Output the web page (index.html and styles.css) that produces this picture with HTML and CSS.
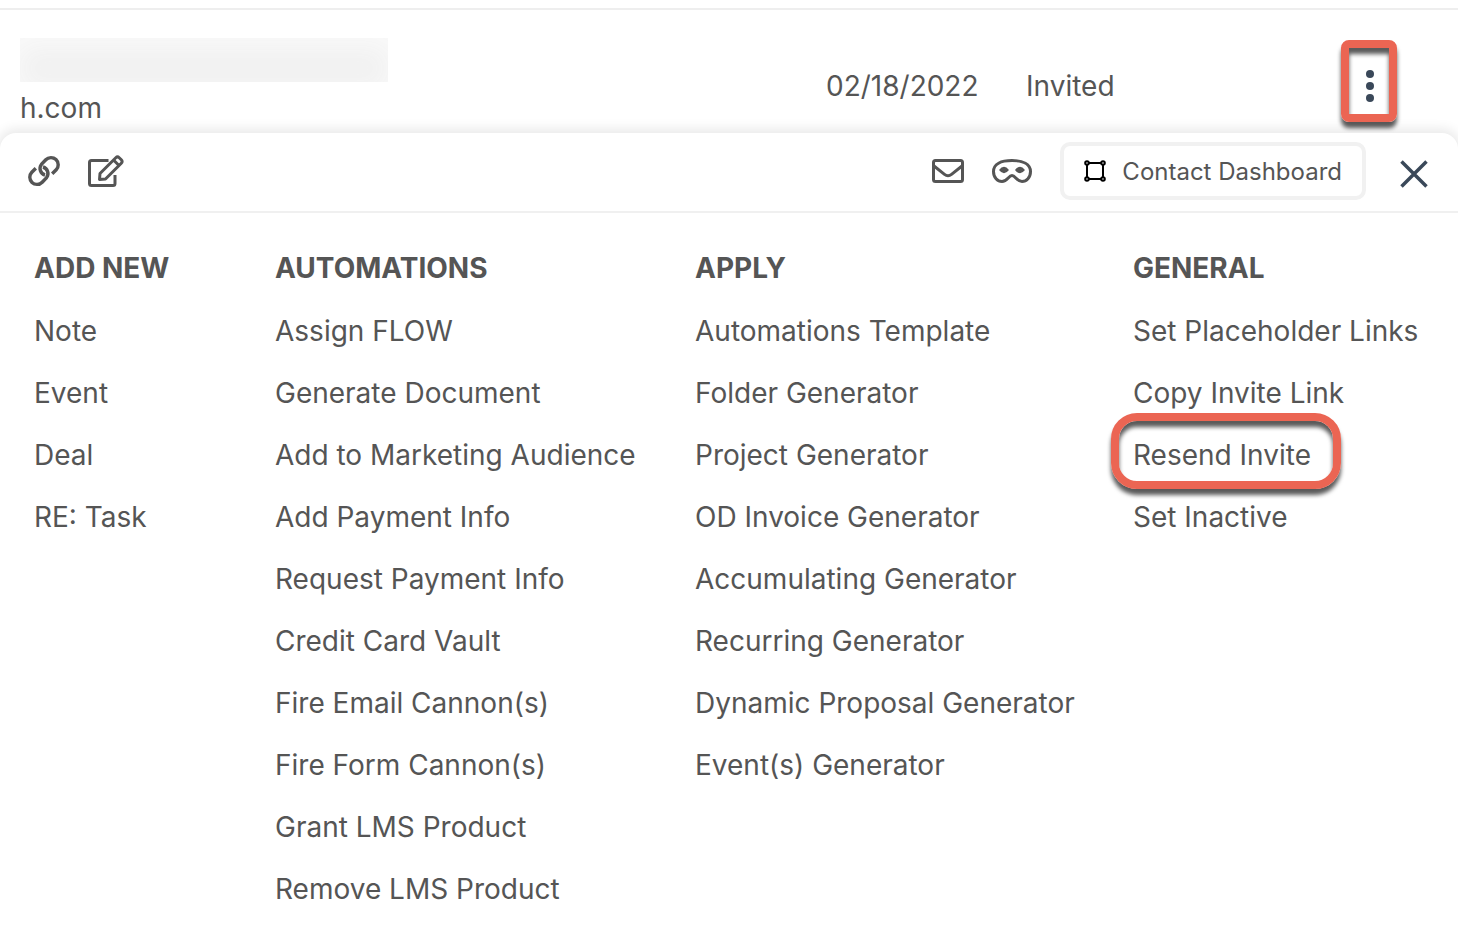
FILE: index.html
```html
<!DOCTYPE html>
<html lang="en">
<head>
  <meta charset="UTF-8">
  <meta name="viewport" content="width=device-width, initial-scale=1.0">
  <title>Contacts</title>
  <link rel="stylesheet" href="styles.css">
</head>
<body>

  <div class="contact-row">
    <div class="contact-email">
      <div class="redacted"></div>
      <span>h.com</span>
    </div>
    <div class="contact-date">02/18/2022</div>
    <div class="contact-status">Invited</div>
    <button type="button" class="more-button marked" aria-label="More actions">
      <svg width="8" height="32" viewBox="0 0 8 32" fill="currentColor">
        <circle cx="4" cy="4" r="4"/>
        <circle cx="4" cy="16" r="4"/>
        <circle cx="4" cy="28" r="4"/>
      </svg>
    </button>
  </div>

  <div class="panel">
    <div class="toolbar">
      <button type="button" class="icon-button" aria-label="Copy link">
        <svg width="32" height="32" viewBox="0 0 32 32" fill="none" stroke="currentColor" stroke-width="3.4">
          <path d="M17 20 A6.800 6.800 0 0 1 13.400 9.400 L17.800 4.800 A7.200 7.200 0 0 1 28.200 14.800 L24.200 18.800"/>
          <path d="M15 12 A6.800 6.800 0 0 1 18.600 22.600 L14.200 27.200 A7.200 7.200 0 0 1 3.800 17.200 L7.800 13.200"/>
        </svg>
      </button>
      <button type="button" class="icon-button" aria-label="Edit">
        <svg width="36" height="32" viewBox="0 0 36 32" fill="none" stroke="currentColor" stroke-width="3" stroke-linejoin="round">
          <path d="M20.5 5.5 H3.5 Q1.5 5.5 1.5 7.5 V28.5 Q1.5 30.5 3.5 30.5 H25 Q27 30.5 27 28.5 V20"/>
          <path d="M11.5 24.5 L12 18.5 L27.8 2.7 Q29.5 1 31.2 2.7 L33.3 4.8 Q35 6.500 33.3 8.200 L17.5 24 Z"/>
          <path d="M25.5 5 L31 10.500"/>
        </svg>
      </button>
      <span class="spacer"></span>
      <button type="button" class="icon-button" aria-label="Send email">
        <svg width="32" height="24" viewBox="0 0 32 24" fill="none" stroke="currentColor" stroke-width="3" stroke-linejoin="round">
          <rect x="1.5" y="1.5" width="29" height="21" rx="2"/>
          <path d="M2 7 L12.500 15.400 Q16 18.200 19.500 15.400 L30 7"/>
        </svg>
      </button>
      <button type="button" class="icon-button" aria-label="Log in as contact">
        <svg width="40" height="24" viewBox="0 0 40 24">
          <path d="M20 1.5 C31 1.5 38.5 5 38.5 12.5 C38.5 18.5 34.5 22.500 30 22.500 C24.500 22.500 23.500 16.500 20 16.500 C16.500 16.500 15.500 22.500 10 22.500 C5.500 22.500 1.500 18.500 1.500 12.500 C1.500 5 9 1.500 20 1.500 Z" fill="none" stroke="currentColor" stroke-width="3"/>
          <path d="M7 11 Q12 4.600 17 11 Q12 17.400 7 11 Z M23 11 Q28 4.600 33 11 Q28 17.400 23 11 Z" fill="currentColor"/>
        </svg>
      </button>
      <button type="button" class="dashboard-button">
        <svg width="22" height="22" viewBox="0 0 22 22" fill="none" stroke="#000" stroke-width="2">
          <path d="M5 3 H17 M5 19 H17 M3 5 V17 M19 5 V17"/>
          <circle cx="3" cy="3" r="1.8"/>
          <circle cx="19" cy="3" r="1.8"/>
          <circle cx="3" cy="19" r="1.8"/>
          <circle cx="19" cy="19" r="1.8"/>
        </svg>
        Contact Dashboard
      </button>
      <button type="button" class="icon-button close-button" aria-label="Close">
        <svg width="28" height="28" viewBox="0 0 28 28" fill="none" stroke="currentColor" stroke-width="3.5">
          <path d="M1.5 1.5 L26.5 26.5 M26.5 1.5 L1.5 26.5"/>
        </svg>
      </button>
    </div>

    <div class="menu">
      <div class="menu-column">
        <h2>ADD NEW</h2>
        <a href="#">Note</a>
        <a href="#">Event</a>
        <a href="#">Deal</a>
        <a href="#">RE: Task</a>
      </div>
      <div class="menu-column">
        <h2>AUTOMATIONS</h2>
        <a href="#">Assign FLOW</a>
        <a href="#">Generate Document</a>
        <a href="#">Add to Marketing Audience</a>
        <a href="#">Add Payment Info</a>
        <a href="#">Request Payment Info</a>
        <a href="#">Credit Card Vault</a>
        <a href="#">Fire Email Cannon(s)</a>
        <a href="#">Fire Form Cannon(s)</a>
        <a href="#">Grant LMS Product</a>
        <a href="#">Remove LMS Product</a>
      </div>
      <div class="menu-column">
        <h2>APPLY</h2>
        <a href="#">Automations Template</a>
        <a href="#">Folder Generator</a>
        <a href="#">Project Generator</a>
        <a href="#">OD Invoice Generator</a>
        <a href="#">Accumulating Generator</a>
        <a href="#">Recurring Generator</a>
        <a href="#">Dynamic Proposal Generator</a>
        <a href="#">Event(s) Generator</a>
      </div>
      <div class="menu-column">
        <h2>GENERAL</h2>
        <a href="#">Set Placeholder Links</a>
        <a href="#">Copy Invite Link</a>
        <a href="#" class="resend">Resend Invite<span class="resend-mark marked"></span></a>
        <a href="#">Set Inactive</a>
      </div>
    </div>
  </div>

</body>
</html>
```
FILE: styles.css
```css
* {
  box-sizing: border-box;
}
body {
  margin: 0;
  padding-top: 8px;
  background-color: #fff;
  color: #555;
  font-family: Inter, "Liberation Sans", sans-serif;
  font-size: 28px;
  line-height: 34px;
}
button {
  padding: 0;
  border: none;
  background: none;
  color: inherit;
  font-family: inherit;
  cursor: pointer;
}
svg {
  display: block;
}

/* contact row */
.contact-row {
  display: grid;
  grid-template-columns: 1fr 200px 315px 56px;
  align-items: start;
  padding: 28px 61px 8px 20px;
  border-top: 2px solid #eee;
}
.redacted {
  width: 368px;
  height: 44px;
  margin-bottom: 9px;
  background-color: #f1f1f1;
  box-shadow: inset 0 8px 24px 2px #f9f9f9;
}
.contact-date,
.contact-status {
  padding-top: 31px;
}
.more-button {
  display: flex;
  justify-content: center;
  align-items: center;
  height: 82px;
  margin-top: 2px;
  padding: 10px 0 0 2px;
  border-radius: 8px;
  color: #3a4859;
}
.marked {
  border: 8px solid #eb6553;
  box-shadow: 0 6px 4px rgba(0, 0, 0, 0.65), inset 0 6px 4px rgba(0, 0, 0, 0.65);
}

/* actions panel */
.panel {
  border-radius: 16px 16px 0 0;
  background-color: #fff;
  box-shadow: 0 -2px 12px 2px rgba(0, 0, 0, 0.09);
}
.toolbar {
  display: flex;
  align-items: center;
  gap: 28px;
  height: 80px;
  padding: 0 30px 2px 28px;
  border-bottom: 2px solid #f0f0f0;
}
.spacer {
  flex: 1;
}
.dashboard-button {
  display: flex;
  align-items: center;
  gap: 16px;
  height: 58px;
  padding: 0 20px;
  border: 4px solid #f1f1f1;
  border-radius: 10px;
  font-size: 24px;
}
.close-button {
  margin-left: 6px;
  padding-top: 6px;
  color: #3a4859;
}
.menu {
  display: grid;
  grid-template-columns: 241fr 420fr 438fr 325fr;
  padding: 37px 0 46px 34px;
}
.menu-column {
  display: flex;
  flex-direction: column;
  align-items: flex-start;
  gap: 28px;
}
.menu-column h2 {
  margin: 0;
  font-size: 28px;
  font-weight: 700;
  line-height: 36px;
}
.menu-column a {
  color: inherit;
  text-decoration: none;
  white-space: nowrap;
}
.resend {
  position: relative;
}
.resend-mark {
  position: absolute;
  top: -25px;
  right: -30px;
  bottom: -17px;
  left: -22px;
  border-radius: 26px;
}
```
